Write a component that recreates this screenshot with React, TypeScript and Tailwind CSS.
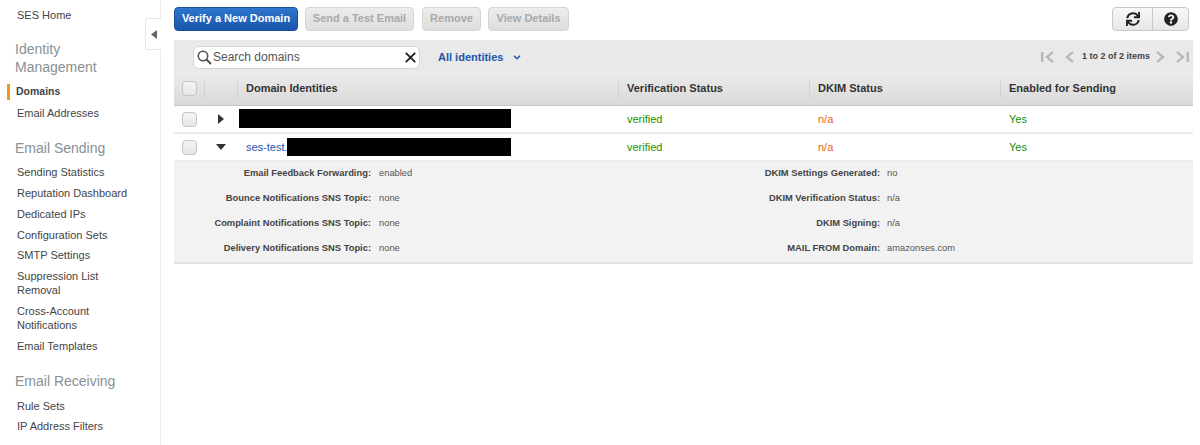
import React from "react";
import { FaSync, FaQuestionCircle } from "react-icons/fa";

const Nav = ({ children, className = "" }: { children: React.ReactNode; className?: string }) => (
  <div className={`pl-[17px] pr-2 text-[11px] leading-[14px] text-[#444] ${className}`}>{children}</div>
);
const Head = ({ children, className = "" }: { children: React.ReactNode; className?: string }) => (
  <div className={`pl-[15px] pr-2 text-[14px] leading-[18px] text-[#879196] ${className}`}>{children}</div>
);
const Check = () => (
  <div className="h-[15px] w-[15px] rounded-[4px] border border-[#c4c4c4] bg-gradient-to-b from-[#f4f4f4] to-[#e6e6e6]" />
);
const TBtn = ({ children, className = "" }: { children: React.ReactNode; className?: string }) => (
  <div className={`flex h-[24px] items-center justify-center rounded-[4px] border border-[#d5d5d5] bg-gradient-to-b from-[#ececec] to-[#dedede] pb-[2px] text-[11px] font-bold text-[#a9a9a9] ${className}`}>{children}</div>
);
const Th = ({ w, children }: { w: string; children: React.ReactNode }) => (
  <div className={`flex h-[20px] items-center border-l border-[#d2d2d2] pl-2 ${w}`}>{children}</div>
);
const Detail = ({ rows, lw, vw, pl }: { rows: [string, string][]; lw: string; vw: string; pl: string }) => (
  <div className="flex flex-col gap-[11px]">
    {rows.map(([k, v]) => (
      <div key={k} className="flex h-[14px] items-center text-[9.35px] leading-[14px]">
        <div className={`${lw} text-right font-bold text-[#444]`}>{k}</div>
        <div className={`${vw} ${pl} text-[#555]`}>{v}</div>
      </div>
    ))}
  </div>
);
const Row = ({ open, children }: { open?: boolean; children: React.ReactNode }) => (
  <div className="flex h-[28px] items-center border-b-2 border-[#ececec] text-[11px]">
    <div className="flex w-[30px] justify-center"><Check /></div>
    <div className="flex w-[32px] justify-center pl-[2px]">
      {open ? (
        <svg width="10" height="6" viewBox="0 0 10 6"><path d="M0 0h10L5 6z" fill="#333" /></svg>
      ) : (
        <svg width="6" height="10" viewBox="0 0 6 10"><path d="M0 0v10l6-5z" fill="#333" /></svg>
      )}
    </div>
    {children}
    <div className="w-[191px] pl-[9px] text-[#1a9000]">verified</div>
    <div className="w-[191px] pl-[9px] text-[#e8650e]">n/a</div>
    <div className="pl-[9px] text-[#1a9000]">Yes</div>
  </div>
);

export default function App() {
  return (
    <div className="flex h-[445px] w-[1200px] overflow-hidden bg-white font-['Liberation_Sans',Arial,sans-serif]">
      <aside className="relative h-full w-[161px] shrink-0 border-r border-[#ececec] pt-[8px]">
        <Nav>SES Home</Nav>
        <Head className="mt-[18px]">Identity<br />Management</Head>
        <div className="mt-[9px] flex h-[14px] items-center text-[10.5px] font-bold text-[#444]">
          <div className="ml-[7px] mr-[6.5px] h-[16px] w-[2.5px] bg-[#f7931e]" />Domains
        </div>
        <Nav className="mt-[7px]">Email Addresses</Nav>
        <Head className="mt-[19px]">Email Sending</Head>
        <Nav className="mt-[8px]">Sending Statistics</Nav>
        <Nav className="mt-[6.75px]">Reputation Dashboard</Nav>
        <Nav className="mt-[6.75px]">Dedicated IPs</Nav>
        <Nav className="mt-[7px]">Configuration Sets</Nav>
        <Nav className="mt-[6.75px]">SMTP Settings</Nav>
        <Nav className="mt-[6.75px]">Suppression List<br />Removal</Nav>
        <Nav className="mt-[6.75px]">Cross-Account<br />Notifications</Nav>
        <Nav className="mt-[7px]">Email Templates</Nav>
        <Head className="mt-[19.5px]">Email Receiving</Head>
        <Nav className="mt-[8.5px]">Rule Sets</Nav>
        <Nav className="mt-[6.5px]">IP Address Filters</Nav>
        <div className="absolute right-[-1px] top-[18px] flex h-[32px] w-[16px] items-center justify-center rounded-l-[3px] border border-r-0 border-[#e6e6e6] bg-white">
          <svg width="6" height="9" viewBox="0 0 6 9"><path d="M6 0v9L0 4.5z" fill="#666" /></svg>
        </div>
      </aside>
      <main className="ml-[13px] w-[1019px] shrink-0 pt-[7px]">
        <div className="flex items-start">
          <div className="flex h-[24px] w-[124px] items-center justify-center rounded-[4px] border border-[#1a4f9c] bg-gradient-to-b from-[#2e75cc] to-[#1a56ab] pb-[2px] text-[11px] font-bold text-white">Verify a New Domain</div>
          <TBtn className="ml-[7px] w-[109px]">Send a Test Email</TBtn>
          <TBtn className="ml-[8px] w-[59px]">Remove</TBtn>
          <TBtn className="ml-[7px] w-[81px]">View Details</TBtn>
          <div className="ml-auto mr-[4px] flex h-[24px] w-[77px] rounded-[4px] border border-[#c8c8c8] bg-gradient-to-b from-[#f8f8f8] to-[#e6e6e6]">
            <div className="flex w-[40px] items-center justify-center border-r border-[#c8c8c8]">
              <FaSync size={14} color="#222" />
            </div>
            <div className="flex flex-1 items-center justify-center">
              <FaQuestionCircle size={14} color="#222" />
            </div>
          </div>
        </div>
        <div className="mt-[9px] flex h-[32px] items-center bg-[#e9e9e9] pt-[2px]">
          <div className="ml-[19px] flex h-[23px] w-[227px] items-center rounded-[6px] border border-[#d6d6d6] bg-white pl-[3px] pr-[3px]">
            <svg width="15" height="15" viewBox="0 0 15 15" fill="none" stroke="#555" strokeWidth="1.6"><circle cx="6" cy="6" r="4.7" /><path d="M9.5 9.5 14 14" strokeWidth="2.2" /></svg>
            <span className="ml-[1px] flex-1 text-[12px] text-[#555]">Search domains</span>
            <svg width="11" height="11" viewBox="0 0 11 11" stroke="#222" strokeWidth="1.9"><path d="M.8.8l9.4 9.4M10.2.8.8 10.2" /></svg>
          </div>
          <span className="ml-[18px] text-[11px] font-bold text-[#1a56ab]">All identities</span>
          <svg className="ml-[10px]" width="8" height="5" viewBox="0 0 8 5" fill="none" stroke="#1a56ab" strokeWidth="1.5"><path d="M1 .8l3 3 3-3" /></svg>
          <div className="ml-auto flex items-center pr-[4px] text-[9px] font-bold text-[#444]">
            <svg width="14" height="12" viewBox="0 0 14 12" fill="none" stroke="#b4b4b4" strokeWidth="2.2"><path d="M1.2 1v10M12 1 6 6l6 5" /></svg>
            <svg className="ml-[10px]" width="9" height="12" viewBox="0 0 9 12" fill="none" stroke="#b4b4b4" strokeWidth="2.2"><path d="M8 1 2 6l6 5" /></svg>
            <span className="ml-[8px] mr-[6px]">1 to 2 of 2 items</span>
            <svg width="9" height="12" viewBox="0 0 9 12" fill="none" stroke="#b4b4b4" strokeWidth="2.2"><path d="M1 1l6 5-6 5" /></svg>
            <svg className="ml-[10px]" width="14" height="12" viewBox="0 0 14 12" fill="none" stroke="#b4b4b4" strokeWidth="2.2"><path d="M12.8 1v10M2 1l6 5-6 5" /></svg>
          </div>
        </div>
        <div className="flex h-[34px] items-center border-b border-[#c6c6c6] bg-gradient-to-b from-[#ececec] to-[#d9d9d9] text-[11px] font-bold text-[#333]">
          <div className="flex w-[30px] justify-center"><Check /></div>
          <div className="h-[20px] w-[33px] border-l border-[#d2d2d2]" />
          <Th w="w-[381px]">Domain Identities</Th>
          <Th w="w-[191px]">Verification Status</Th>
          <Th w="w-[191px]">DKIM Status</Th>
          <Th w="w-[190px]">Enabled for Sending</Th>
        </div>
        <Row>
          <div className="w-[382px] pl-[3px]"><div className="mb-[2px] h-[19px] w-[272px] bg-black" /></div>
        </Row>
        <Row open>
          <div className="flex w-[382px] items-center pl-[10px]">
            <span className="w-[41px] whitespace-nowrap text-[#1a56ab]">ses-test.</span>
            <div className="h-[18px] w-[224px] bg-black" />
          </div>
        </Row>
        <div className="flex h-[102px] border-b-2 border-[#e2e2e2] bg-[#f2f2f2] pt-[4px]">
          <Detail lw="w-[197px]" vw="w-[348px]" pl="pl-[8px]" rows={[["Email Feedback Forwarding:", "enabled"], ["Bounce Notifications SNS Topic:", "none"], ["Complaint Notifications SNS Topic:", "none"], ["Delivery Notifications SNS Topic:", "none"]]} />
          <Detail lw="w-[161px]" vw="w-[200px]" pl="pl-[7px]" rows={[["DKIM Settings Generated:", "no"], ["DKIM Verification Status:", "n/a"], ["DKIM Signing:", "n/a"], ["MAIL FROM Domain:", "amazonses.com"]]} />
        </div>
      </main>
    </div>
  );
}
